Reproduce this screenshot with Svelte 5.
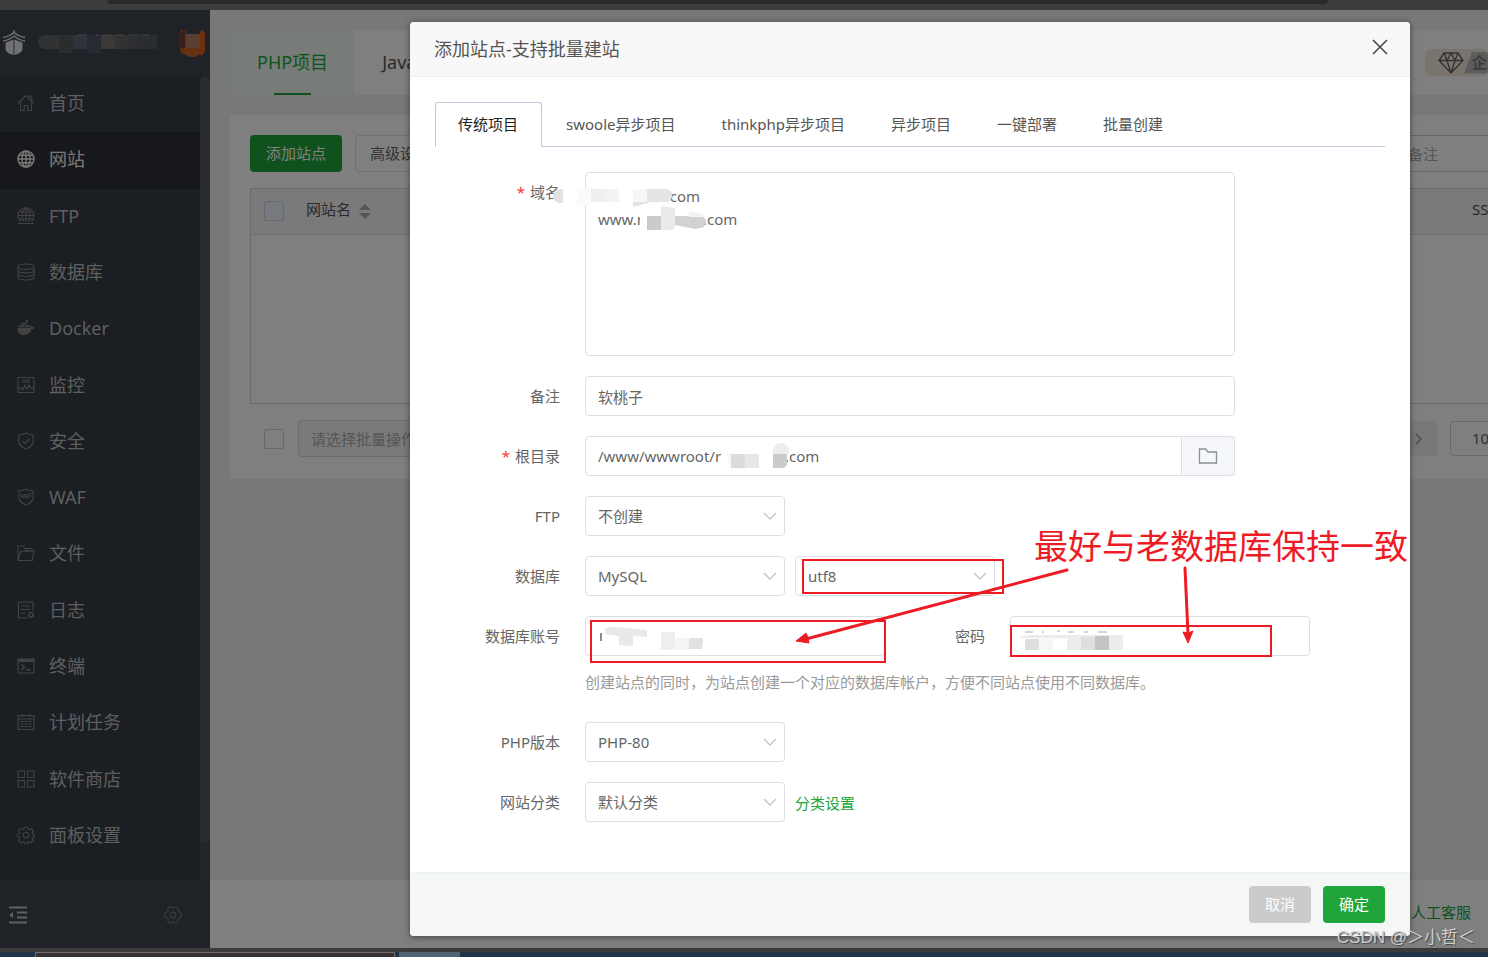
<script>
  const menu = [
    { name: '首页', icon: 'home' },
    { name: '网站', icon: 'globe', active: true },
    { name: 'FTP', icon: 'ftp' },
    { name: '数据库', icon: 'db' },
    { name: 'Docker', icon: 'docker' },
    { name: '监控', icon: 'monitor' },
    { name: '安全', icon: 'shield' },
    { name: 'WAF', icon: 'waf' },
    { name: '文件', icon: 'folder' },
    { name: '日志', icon: 'log' },
    { name: '终端', icon: 'terminal' },
    { name: '计划任务', icon: 'calendar' },
    { name: '软件商店', icon: 'grid' },
    { name: '面板设置', icon: 'gear' }
  ];
  const tabs = ['传统项目', 'swoole异步项目', 'thinkphp异步项目', '异步项目', '一键部署', '批量创建'];
  let current = $state(0);
  let domains = $state('\u2003\u2003\u2003\u2003   com\nwww.r\u2003\u2003\u2003\u2003.com');
  let note = $state('软桃子');
  let root = $state('/www/wwwroot/r\u2003\u2003\u2003\u2003 .com');
</script>

{#snippet chevron()}
  <svg class="chev" viewBox="0 0 14 14" aria-hidden="true"><path d="M1 4l6 6 6-6" fill="none" stroke="#c0c4cc" stroke-width="1.4" /></svg>
{/snippet}

{#snippet icon(kind)}
  <svg class="ico" viewBox="0 0 18 18" fill="none" stroke="currentColor" stroke-width="1.1" aria-hidden="true">
    {#if kind === 'home'}
      <path d="M1 9.5L9 1.5l8 8M3.5 8v8.5h3.7v-5h3.6v5h3.7V8M12.5 4V2h2.3v4.4" />
    {:else if kind === 'globe'}
      <circle cx="9" cy="9" r="8" stroke-width="1.5" /><ellipse cx="9" cy="9" rx="4" ry="8" stroke-width="1.4" /><path d="M9 1v16M1 9h16M2 5.3h14M2 12.7h14" stroke-width="1.4" />
    {:else if kind === 'ftp'}
      <path d="M3.500 14.500A8 8 0 1 1 14.500 14.500" /><path d="M6.500 14.500C4 10 5 3 9 1c4 2 5 9 2.500 13.500M9 1v13.500M1 8.500h16M2.500 5h13M1.500 12h15M1 16.500h16" />
    {:else if kind === 'db'}
      <ellipse cx="9" cy="3.700" rx="8" ry="2.700" /><path d="M1 3.700v10.600c0 1.500 3.600 2.700 8 2.700s8-1.200 8-2.700V3.700M1 7.200c0 1.500 3.600 2.700 8 2.700s8-1.200 8-2.700M1 10.800c0 1.500 3.600 2.700 8 2.700s8-1.200 8-2.700" />
    {:else if kind === 'docker'}
      <path d="M.500 8.800h12.700c.300-1.300 0-2.300-.300-2.800 1 .200 1.800 1 2 1.900 1-.300 2 .100 2.600.600-.500 1.100-1.600 1.600-3 1.600-1.300 4-4.200 6.100-8 6.100C2.700 16.200.400 13.300.500 8.800z" fill="currentColor" stroke="none" />
      <path d="M1.800 7.200h2.300M4.600 7.200h2.300M7.400 7.200h2.300M10.200 7.200h2.300M4.600 4.700h2.300M7.400 4.700h2.300M8.800 2.200h2.300" stroke-width="2" />
    {:else if kind === 'monitor'}
      <path d="M1 1.500h16v15H1zM5 4h8M5 6h8M1 12h3l1.500 2 2.200-5 2 4L12 9l1.500 3H17" />
    {:else if kind === 'shield'}
      <path d="M9 1c2.500 1.600 5 2 7.200 2.100v6c0 4-3 6.400-7.200 8-4.200-1.600-7.200-4-7.200-8v-6C4 3 6.500 2.600 9 1zM5.500 9l2.500 2.500 4.500-4.700" />
    {:else if kind === 'waf'}
      <path d="M9 1c2.500 1.300 5 1.600 7.200 1.700v6.400c0 4-3 6.400-7.200 8-4.200-1.600-7.200-4-7.200-8V2.700C4 2.600 6.500 2.300 9 1z" />
      <path d="M3.700 6l.900 4 1-3.500 1 3.500.900-4M8 10l1.300-4 1.300 4M8.500 9h1.800M12 10V6h2.600M12 8h2.200" stroke-width=".9" />
    {:else if kind === 'folder'}
      <path d="M1 16.500V2h5l2 2.500h7v2.800M1 16.500L3.700 7.300H17l-1.800 9.200zM7.500 7.300l1-1h4" />
    {:else if kind === 'log'}
      <path d="M10 17H1.500V1h14.500v9M4 5h9M4 8.500h9M4 12h5" /><circle cx="14" cy="14" r="2.200" stroke-width="1.600" />
    {:else if kind === 'terminal'}
      <path d="M1 2h16v14H1z" /><path d="M1 3.500h16" stroke-width="3" /><path d="M4.500 7.500l3 2.700-3 2.600M9 12.800h4.500" stroke-width="1.400" />
    {:else if kind === 'calendar'}
      <path d="M1 2.500h16v14H1zM1 6h16M5.500 1v3M12.500 1v3M3.500 8.500h3M7.500 8.500h3M11.500 8.500h3M3.500 11h3M7.500 11h3M11.500 11h3M3.500 13.500h3M7.500 13.500h3M11.500 13.500h3" />
    {:else if kind === 'grid'}
      <path d="M1 1h6.500v6.500H1zM10.500 1H17v6.500h-6.500zM1 10.500h6.500V17H1zM10.500 10.500H17V17h-6.500z" />
    {:else}
      <circle cx="9" cy="9" r="2.800" />
      <path d="M7.400 1h3.200l.5 2.200 1.300.6 2-1.200 2 2-1.100 2 .5 1.300 2 .6v2.200l-2.100.6-.5 1.300 1.200 2-2.100 2.100-2-1.200-1.300.5-.6 2.100H7.600L7 16l-1.300-.5-2 1.200-2.100-2.100 1.200-2-.5-1.300L.2 10.700V8.200l2.100-.5.500-1.300-1.100-2 2-2 2 1.200L6.900 3z" />
    {/if}
  </svg>
{/snippet}

<div class="screen">
  <div class="browser"><span></span></div>
  <div class="app">
    <aside>
      <div class="brand">
        <svg class="logo" viewBox="0 0 24 26" aria-hidden="true">
          <path d="M1 7.500C5 7 9 5 12 2.500 15 5 19 7 23 7.500M1 11C5 10.500 9 8.500 12 6c3 2.500 7 4.500 11 5M12 0v4" fill="none" stroke="#d5d5d5" stroke-width="1.600" />
          <path d="M3.500 12.500L11.500 9.500V25c-4-1-8-3-8-6zM12.300 9.500l8.200 3V19c0 3-4 5-8.200 6z" fill="#e2e2e2" />
        </svg>
        <svg class="name" viewBox="0 0 122 20" aria-hidden="true">
          <path d="M10 2h14v14H10a7 7 0 0 1 0-14z" fill="#606468" /><path d="M24 2h14v18H24z" fill="#54585a" /><path d="M38 2h14v14H38z" fill="#626674" /><path d="M52 2h14v18H52z" fill="#4d5466" /><path d="M66 2h14v14H66z" fill="#74736c" /><path d="M80 2h14v14H80z" fill="#646468" /><path d="M94 2h14v14H94z" fill="#5a5d62" /><path d="M108 2h14v14h-14z" fill="#54595b" />
          <path d="M43 2h8M60 2h4M68 2h8M80 2h9M94 2h8M106 2h9" stroke="#888" stroke-width="1" />
        </svg>
        <svg class="badge" viewBox="0 0 28 28" aria-hidden="true">
          <path d="M4 1h5v24H5l-2-3V3z" fill="#c75520" /><path d="M24 1h2l2 3v19l-3 3h-3V7z" fill="#dc5a18" /><path d="M8 0v19H4C-1 15-1 6 8 0z" fill="#6b4035" /><path d="M9 5h14v14H9z" fill="#b47c64" /><path d="M7 19h16v6l-5 3h-5l-6-3z" fill="#ca6629" />
        </svg>
      </div>
      <div class="menuwrap">
        <nav>
          {#each menu as m}
            <a href="#menu" class:active={m.active}>{@render icon(m.icon)}<span>{m.name}</span></a>
          {/each}
        </nav>
        <div class="track"><i></i></div>
      </div>
      <div class="sidefoot">
        <svg viewBox="0 0 18 18" stroke="#c2c2c2" fill="#c2c2c2" aria-hidden="true"><path d="M0 1.500h18M8 6.500h10M8 11.500h10M0 16.500h18" stroke-width="1.800" /><path d="M0 9l4-3v6z" stroke="none" /></svg>
        <svg viewBox="0 0 18 18" stroke="#74787c" fill="none" stroke-width="1.200" stroke-linejoin="round" aria-hidden="true"><path d="M5.500 1h2L9 2l1.500-1h2l1.500 1.500V5l3 2v4l-3 2v2.500L12.500 17h-2L9 16l-1.500 1h-2L4 15.500V13l-3-2V7l3-2V2.500z" /><circle cx="9" cy="9" r="2.800" /></svg>
      </div>
    </aside>

    <main>
      <div class="projects">
        <button class="on">PHP项目</button>
        <button>Java项目</button>
        <div class="vip">
          <svg viewBox="0 0 26 22" fill="none" stroke="#666" stroke-width="1.400" aria-hidden="true"><path d="M6 1h14l5 7.500L13 21 1 8.500zM1 8.500h24M6 1l3 7.500L13 21l4-12.500L20 1M9 8.500L13 1l4 7.500" /></svg>
          <span>企业版</span>
        </div>
      </div>
      <section class="card">
        <div class="tools">
          <button class="add">添加站点</button>
          <button class="adv">高级设置</button>
          <input aria-label="搜索" placeholder="请输入域名或备注" />
        </div>
        <div class="tablebox">
          <table>
            <thead>
              <tr>
                <th class="ck"><input type="checkbox" aria-label="全选" /></th>
                <th>网站名 <svg viewBox="0 0 12 16" aria-hidden="true"><path d="M0 7l6-6 6 6zM0 10h12l-6 6z" fill="#a8a8a8" /></svg></th>
                <th class="ssl">SSL证书</th>
              </tr>
            </thead>
          </table>
        </div>
        <div class="batch">
          <input type="checkbox" aria-label="选择" />
          <select aria-label="批量操作" disabled><option>请选择批量操作</option></select>
          <button class="next" aria-label="下一页"><svg viewBox="0 0 10 14" aria-hidden="true"><path d="M2 2l5 5-5 5" fill="none" stroke="#aaa" stroke-width="2" /></svg></button>
          <button class="size">10条/页</button>
        </div>
      </section>
      <footer><a href="#service">人工客服</a></footer>
    </main>

    <div class="mask">
      <div class="modal" role="dialog" aria-labelledby="dlg">
        <header>
          <h1 id="dlg">添加站点-支持批量建站</h1>
          <button class="close" aria-label="关闭"><svg viewBox="0 0 16 16" aria-hidden="true"><path d="M1 1l14 14M15 1L1 15" stroke="#444" stroke-width="1.500" /></svg></button>
        </header>
        <div class="body">
          <div class="tabs">
            {#each tabs as t, i}
              <button class:cur={current === i} onclick={() => (current = i)}>{t}</button>
            {/each}
          </div>
          <form>
            <div class="row top">
              <label for="domain"><b>*</b>域名</label>
              <textarea id="domain" class="wide" bind:value={domains} spellcheck="false"></textarea>
            </div>
            <div class="row">
              <label for="note">备注</label>
              <input id="note" class="wide" bind:value={note} />
            </div>
            <div class="row">
              <label for="root"><b>*</b>根目录</label>
              <div class="wide group">
                <input id="root" bind:value={root} spellcheck="false" />
                <button type="button" aria-label="选择目录"><svg viewBox="0 0 20 18" aria-hidden="true"><path d="M1.500 2h6l2.500 3h8.500v11h-17z" fill="none" stroke="#8a8f99" stroke-width="1.300" /></svg></button>
              </div>
            </div>
            <div class="row">
              <label for="ftp">FTP</label>
              <div class="sel"><select id="ftp"><option>不创建</option></select>{@render chevron()}</div>
            </div>
            <div class="row">
              <label for="db">数据库</label>
              <div class="sel"><select id="db"><option>MySQL</option></select>{@render chevron()}</div>
              <div class="sel"><select aria-label="编码"><option>utf8</option></select>{@render chevron()}</div>
            </div>
            <div class="row account">
              <label for="user">数据库账号</label>
              <input id="user" class="half" />
              <label for="pwd" class="pwd">密码</label>
              <input id="pwd" class="half" />
            </div>
            <p>创建站点的同时，为站点创建一个对应的数据库帐户，方便不同站点使用不同数据库。</p>
            <div class="row">
              <label for="php">PHP版本</label>
              <div class="sel"><select id="php"><option>PHP-80</option></select>{@render chevron()}</div>
            </div>
            <div class="row">
              <label for="cat">网站分类</label>
              <div class="sel"><select id="cat"><option>默认分类</option></select>{@render chevron()}</div>
              <a href="#category">分类设置</a>
            </div>
          </form>
        </div>
        <div class="actions">
          <button class="cancel">取消</button>
          <button class="ok">确定</button>
        </div>

        <svg class="marks" viewBox="0 0 1000 914" aria-hidden="true">
          <path d="M150 167h3v14h-3a6 6 0 0 1 0-14z" fill="#e2e2e2" />
          <path d="M167 166h14v17h-14z" fill="#fafafa" /><path d="M181 167h14v13h-14z" fill="#efefef" /><path d="M195 167h14v13h-14z" fill="#f3f3f3" /><path d="M223 167h14v15h-14z" fill="#f7f7f7" />
          <path d="M237 167h15a8 6 0 0 1 10 7 6 6 0 0 1-5 6h-20z" fill="#e4e4e4" /><path d="M223 180h17l-9 3-8 2z" fill="#e2e2e2" />
          <path d="M230 184h32v24h-32z" fill="#fff" /><path d="M237 194h14v14h-14z" fill="#cbcbcb" /><path d="M251 184l14 2v19l-3 3h-11z" fill="#eaeaea" /><path d="M265 194h25a6 6 0 0 1 0 12l-5 1-20-4z" fill="#d2d2d2" /><path d="M279 189l14 3v3h-14z" fill="#f3f3f3" />
          <path d="M316 432h20v15h-15z" fill="#f7f7f7" /><path d="M321 432h14v14h-14z" fill="#dcdcdc" /><path d="M335 432h14v14h-14z" fill="#e7e7e7" /><path d="M363 432v-3a8 8 0 0 1 16 0v3z" fill="#ededed" /><path d="M363 432h14v11l-3 3h-11z" fill="#cbcbcb" />
          <path d="M191 611v8" stroke="#666" stroke-width="1.500" /><path d="M195 607q4-3 10-2l32 3v7l-14-1v10l-14-1v-9l-14-2z" fill="#e9e9e9" /><path d="M251 610h14v6h14v11l-28 1z" fill="#eeeeee" /><path d="M279 616h14l-1 11h-13z" fill="#e1e1e1" /><path d="M265 616h14v12h-14z" fill="#f4f4f4" />
          <path d="M607 616l11-3h95v4z" fill="#ececec" /><path d="M615 610h8M633 609v2M647 609h3M658 610h6M674 610h4M688 610h9" stroke="#aaa" />
          <path d="M615 617h14v11h-14z" fill="#dedede" /><path d="M629 617h14v11h-14z" fill="#f6f6f6" /><path d="M657 615h14v13h-14z" fill="#ececec" /><path d="M671 615h14v13h-14z" fill="#dfdfdf" /><path d="M685 614h14v14h-14z" fill="#c4c4c4" /><path d="M699 614h14v14h-14z" fill="#ededed" />
          <g fill="none" stroke="#ed1c24" stroke-width="2">
            <path d="M393 538h200v33H393zM181 599h294v41H181zM601 604h260v30H601z" />
            <path d="M657 548L396 617M775 546l3 66" stroke-width="3" stroke-linecap="round" />
          </g>
          <path d="M386 619l10-8 2 5 1 5zM778 621l-5-11 5 1 5-2z" fill="#ed1c24" stroke="#ed1c24" />
        </svg>
        <div class="remark">最好与老数据库保持一致</div>
      </div>
    </div>
  </div>
  <div class="taskbar"><i class="t1"></i><i class="t2"></i></div>
  <div class="mark">CSDN @＞小哲＜</div>
</div>

<style>
  :global(body) { margin: 0; }
  .screen, button, input, select, textarea { font-family: "Noto Sans", "Noto Sans CJK SC", sans-serif; font-size: 15px; }
  .screen { position: relative; min-height: 100vh; display: flex; flex-direction: column; overflow: hidden; color: #666; }
  .screen *, .screen *::before { box-sizing: border-box; }
  button { cursor: pointer; padding: 0; border: 0; background: none; color: inherit; white-space: nowrap; }
  svg { display: block; flex: none; }
  a { text-decoration: none; }
  .browser { height: 10px; background: #3c3c3c; padding: 0 160px 0 107px; }
  .browser span { display: block; height: 4px; background: #292929; border-radius: 0 0 12px 12px; }
  .app { position: relative; flex: 1; display: flex; }

  aside { width: 210px; flex: none; display: flex; flex-direction: column; background: #3e454c; }
  .brand { height: 66px; display: flex; align-items: center; padding: 0 5px 0 2px; }
  .logo { width: 24px; height: 26px; }
  .name { width: 122px; height: 20px; margin-left: 9px; }
  .badge { width: 28px; height: 28px; margin-left: auto; }
  .menuwrap { flex: 1; display: flex; background: #373d45; }
  nav { flex: 1; display: flex; flex-direction: column; padding-bottom: 17px; }
  nav a { flex: 1; display: flex; align-items: center; gap: 14px; padding: 0 0 2px 17px; color: #bdbdbd; font-size: 18px; line-height: 24px; }
  nav .ico { color: #858585; }
  nav a.active { background: #2e3138; color: #f0f0f0; }
  nav a.active .ico { color: #f0f0f0; }
  .ico { width: 18px; height: 18px; }
  .track { width: 10px; background: #434951; padding-bottom: 38px; border-radius: 5px; }
  .track i { display: block; height: 100%; border-radius: 5px; background: #52565d; }
  .sidefoot { height: 67px; display: flex; align-items: center; justify-content: space-between; padding: 0 28px 0 9px; }
  .sidefoot svg { width: 18px; height: 18px; }

  main { flex: 1; min-width: 0; display: flex; flex-direction: column; overflow: hidden; background: #f1f1f1; }
  .projects { height: 65px; flex: none; margin: 20px 0 20px 20px; background: #fff; display: flex; align-items: center; }
  .projects button { position: relative; height: 65px; padding: 0 27px 4px; font-size: 18px; color: #555; }
  .projects .on { background: #eff9f1; color: #20a53a; }
  .projects .on::before { content: ""; position: absolute; left: 44px; right: 44px; bottom: 0; height: 2px; background: #20a53a; }
  .vip { width: 63px; height: 27px; margin-left: auto; display: flex; align-items: center; padding-left: 13px; background: #f4e9dc; border-radius: 6px; color: #777; font-weight: bold; white-space: nowrap; overflow: hidden; }
  .vip svg { width: 26px; height: 22px; }
  .vip span { height: 22px; line-height: 20px; padding: 0 8px; background: #bbb; clip-path: polygon(8px 0, 100% 0, 100% 100%, 0 100%); }
  .card { background: #fff; margin-left: 20px; padding: 20px 0 22px 20px; }
  .tools { display: flex; gap: 13px; }
  .tools button { height: 37px; padding: 0 16px 2px; border-radius: 4px; }
  .tools .add { background: #20a53a; color: #fff; }
  .tools .adv { padding: 0 14px 2px; border: 1px solid #dcdfe6; }
  .tools input { width: 300px; height: 37px; margin: 0 -115px 0 auto; padding: 0 14px; border: 1px solid #ccc; }
  .tools input::placeholder { color: #aaa; opacity: 1; }
  .tablebox { height: 216px; margin-top: 16px; border: 1px solid #d6d6d6; border-right: 0; overflow: hidden; }
  table { width: 100%; table-layout: fixed; border-collapse: collapse; background: #f5f5f5; }
  th { height: 45px; padding: 0 9px 6px; border-bottom: 1px solid #e3e3e3; text-align: left; font-weight: normal; color: #555; white-space: nowrap; }
  th svg { display: inline-block; width: 12px; height: 16px; margin-left: 4px; vertical-align: middle; }
  th.ck { width: 46px; padding: 0 0 0 13px; }
  th.ssl { width: 16px; padding: 0 0 6px; overflow: visible; }
  input[type="checkbox"] { appearance: none; display: block; width: 20px; height: 20px; margin: 0; border: 1px solid #d0d3da; border-radius: 2px; background: #fff; }
  th input[type="checkbox"] { background: #edf2fc; }
  .batch { display: flex; align-items: center; margin-top: 16px; padding-left: 14px; overflow: hidden; }
  .batch select { appearance: none; width: 200px; height: 37px; margin-left: 14px; padding: 0 12px; border: 1px solid #d8d8d8; border-radius: 4px; background: #f5f5f5; color: #aaa; opacity: 1; }
  .next { width: 37px; height: 35px; margin-left: auto; background: #f1f1f1; display: grid; place-items: center; }
  .next svg { width: 10px; height: 14px; }
  .size { width: 100px; height: 35px; margin: 0 -62px 0 13px; border: 1px solid #d0d3da; border-radius: 4px; text-align: left; padding: 0 0 2px 21px; }
  main footer { height: 68px; margin-top: auto; background: #fff; display: flex; align-items: center; justify-content: flex-end; padding: 0 17px 5px 0; }
  main footer a { color: #20a53a; }

  .mask { position: absolute; inset: 0; padding: 12px 78px 0 410px; background: rgba(0, 0, 0, .5); }
  .modal { position: relative; width: 100%; max-width: 1000px; background: #fff; border-radius: 4px; box-shadow: 0 1px 6px rgba(0, 0, 0, .5); }
  .modal header { height: 55px; display: flex; align-items: center; justify-content: space-between; padding: 0 22px 0 24px; background: #f8f8f8; border-bottom: 1px solid #eee; border-radius: 4px 4px 0 0; }
  h1 { margin: 0; font-size: 18px; line-height: 24px; font-weight: normal; color: #555; }
  .close { height: 16px; margin-bottom: 4px; }
  .close svg { width: 16px; height: 16px; }
  .body { padding: 25px 25px 50px; }
  .tabs { display: flex; border-bottom: 1px solid #c6c6d8; height: 45px; margin-bottom: 25px; }
  .tabs button { height: 45px; padding: 0 22px 4px; border: 1px solid transparent; border-bottom: 0; color: #555; }
  .tabs .cur { padding: 0 23px 4px 22px; margin-right: 1px; border-color: #c6c6d8; border-radius: 3px 3px 0 0; background: #fff; color: #222; }
  form { display: flex; flex-direction: column; gap: 20px; }
  .row { display: flex; align-items: center; }
  .row label { width: 125px; flex: none; margin-right: 25px; text-align: right; line-height: 22px; }
  .row.top { align-items: flex-start; }
  .row.top label { padding-top: 9px; }
  label b { color: #f33; font-weight: normal; margin-right: 5px; }
  form input, form select, textarea { height: 40px; margin: 0; padding: 0 12px; border: 1px solid #dcdfe6; border-radius: 4px; background: #fff; color: #666; outline: 0; }
  textarea { display: block; height: 184px; padding: 12px; line-height: 23px; resize: none; }
  .wide { width: 650px; }
  .group { display: flex; }
  .group input { flex: 1; border-radius: 4px 0 0 4px; }
  .group button { width: 53px; border: 1px solid #dcdfe6; border-left: 0; border-radius: 0 4px 4px 0; background: #f5f7fa; display: grid; place-items: center; }
  .group svg { width: 20px; height: 18px; }
  .sel { display: grid; width: 200px; margin-right: 10px; align-items: center; }
  .sel select { grid-area: 1 / 1; appearance: none; width: 100%; }
  .chev { grid-area: 1 / 1; justify-self: end; margin-right: 8px; width: 14px; height: 14px; pointer-events: none; }
  .half { width: 300px; }
  .row label.pwd { width: 100px; }
  p { margin: -5px 0 9px 150px; line-height: 22px; color: #999; }
  form a { color: #20a53a; }
  .actions { height: 64px; display: flex; align-items: center; justify-content: flex-end; gap: 12px; padding-right: 25px; background: #f5f7f6; border-top: 1px solid #edf1f0; border-radius: 0 0 4px 4px; }
  .actions button { width: 62px; height: 37px; padding-bottom: 2px; border-radius: 4px; color: #fff; background: #cbcbcb; }
  .actions .ok { background: #20a53a; }
  .marks { position: absolute; left: 0; top: 0; width: 1000px; height: 914px; pointer-events: none; }
  .remark { position: absolute; left: 624px; top: 500px; font-size: 34px; line-height: 48px; color: #ed1c24; white-space: nowrap; }

  .taskbar { height: 9px; display: flex; gap: 4px; padding-left: 35px; border-top: 4px solid #3b3b3b; background: #20344a; }
  .t1 { width: 360px; background: #333; border: 1px solid #7a6a6c; border-bottom: 0; }
  .t2 { width: 61px; background: #506672; }
  .mark { position: absolute; right: 13px; bottom: 7px; font-family: "Liberation Sans", "Noto Sans CJK SC", sans-serif; font-size: 17px; line-height: 24px; color: #d0d0d0; text-shadow: 1px 1px 1px #444; white-space: nowrap; }
</style>
